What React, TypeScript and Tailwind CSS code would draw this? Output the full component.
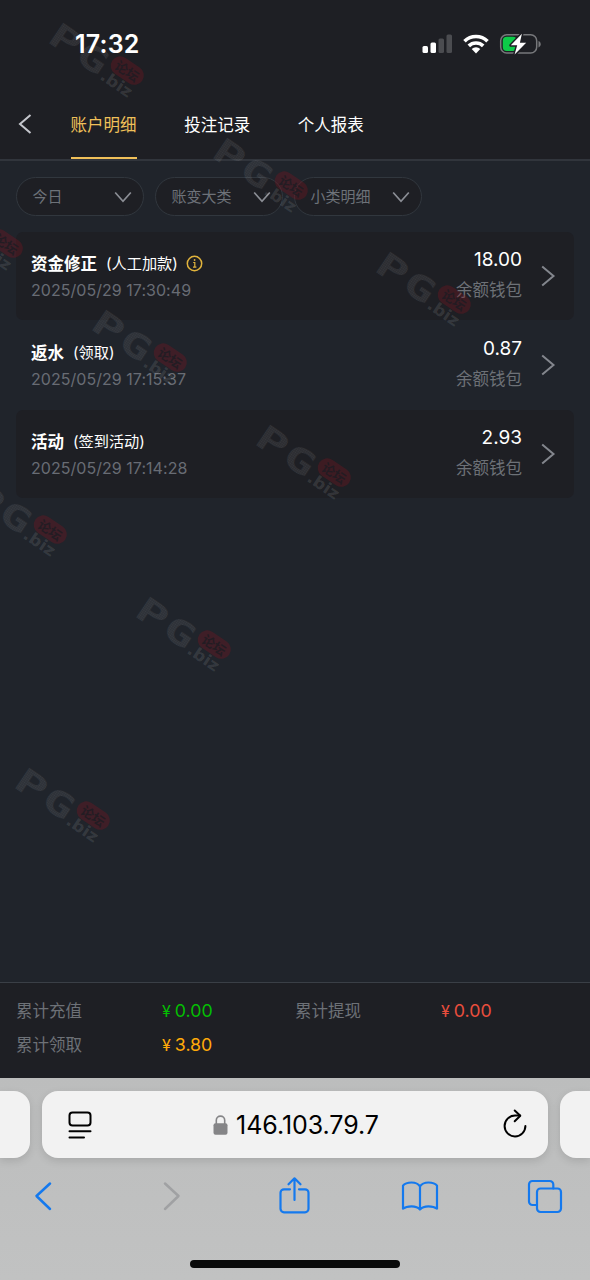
import type { ReactNode } from 'react';
import clsx from 'clsx';

interface RecordItem {
  id: number;
  title: string;
  detail: string;
  time: string;
  amount: string;
  wallet: string;
  hasInfo?: boolean;
}

const tabs = ['账户明细', '投注记录', '个人报表'];

const filters = ['今日', '账变大类', '小类明细'];

const records: RecordItem[] = [
  { id: 1, title: '资金修正', detail: '(人工加款)', time: '2025/05/29 17:30:49', amount: '18.00', wallet: '余额钱包', hasInfo: true },
  { id: 2, title: '返水', detail: '(领取)', time: '2025/05/29 17:15:37', amount: '0.87', wallet: '余额钱包' },
  { id: 3, title: '活动', detail: '(签到活动)', time: '2025/05/29 17:14:28', amount: '2.93', wallet: '余额钱包' },
];

const totals = [
  { label: '累计充值', value: '0.00', color: 'text-[#04be02]' },
  { label: '累计提现', value: '0.00', color: 'text-[#ea4e3d]' },
  { label: '累计领取', value: '3.80', color: 'text-[#ffaa09]' },
];

// Centre of the badge in every watermark stamp
const stamps = [
  [127, 71], [291, 186], [454, 300],
  [6, 244], [170, 358], [334, 473],
  [50, 530], [214, 645], [93, 816],
];

function StatusBar() {
  return (
    <div className="flex h-[88px] items-center justify-between pl-[75px] pr-[48px]">
      <span className="text-[25px] font-semibold leading-none tracking-[0.2px] text-white">17:32</span>
      <div className="flex items-center">
        <svg width="31" height="20" viewBox="0 0 31 20">
          <rect x="0.5" y="12" width="5.5" height="7" rx="1.5" fill="#fff" />
          <rect x="8.5" y="8.5" width="5.5" height="10.5" rx="1.5" fill="#fff" />
          <rect x="16.5" y="4.5" width="5.5" height="14.5" rx="1.5" fill="#4b4c50" />
          <rect x="24.5" y="0.5" width="5.5" height="18.5" rx="1.5" fill="#4b4c50" />
        </svg>
        <svg className="ml-[10px]" width="26" height="20" viewBox="0 0 26 20" fill="none" stroke="#fff" strokeWidth="3.6">
          <path d="M1.5 7.2a16.4 16.4 0 0 1 23 0" />
          <path d="M5.8 11.9a10.3 10.3 0 0 1 14.4 0" />
          <path d="M13 19.5l-4.3-4.4a6.2 6.2 0 0 1 8.6 0z" fill="#fff" stroke="none" />
        </svg>
        <svg className="ml-[10px]" width="43" height="24" viewBox="0 0 43 24">
          <rect x="1.7" y="2.7" width="36" height="18.4" rx="6" fill="none" stroke="#77787b" strokeWidth="1.5" />
          <path d="M39.5 9v6.4c1.6-.7 2.2-1.8 2.2-3.2s-.6-2.5-2.2-3.2z" fill="#77787b" />
          <rect x="3.8" y="4.8" width="14" height="14.2" rx="4" fill="#0ccb48" />
          <path
            d="M22.9 1.8L11.8 13.3h6.4L15.6 22.6l11.6-11.9h-6.3z"
            fill="#fff"
            stroke="#1e1f24"
            strokeWidth="3"
            strokeLinejoin="round"
            paintOrder="stroke"
          />
        </svg>
      </div>
    </div>
  );
}

function TabBar() {
  return (
    <nav className="flex h-[73px] border-b-2 border-[#31353c] pl-[18px]">
      <svg className="mt-[25px]" width="14" height="22" viewBox="0 0 14 22" fill="none" stroke="#c5c7cd" strokeWidth="2">
        <path d="M12.5 2L2 11l10.5 9" />
      </svg>
      <div className="ml-[38.6px] flex gap-[47.6px]">
        {tabs.map((tab, index) => (
          <button
            key={tab}
            className={clsx(
              'h-[71px] border-b-2 pt-[2px] text-[16.5px] leading-[70px]',
              index === 0 ? 'border-[#f0c059] text-[#f0c059]' : 'border-transparent text-white',
            )}
          >
            {tab}
          </button>
        ))}
      </div>
    </nav>
  );
}

function FilterSelect({ label }: { label: string }) {
  return (
    <button className="flex h-[39px] w-[128px] items-center justify-between rounded-full border-[1.5px] border-[#31373e] bg-[#1e1f24] pl-4 pr-[10.5px] text-[15px] text-[#6d7279]">
      <span className="pt-[2px]">{label}</span>
      <svg width="18" height="12" viewBox="0 0 18 12" fill="none" stroke="#8b8e95" strokeWidth="1.7">
        <path d="M1.2 1.5L9 10.3l7.8-8.8" />
      </svg>
    </button>
  );
}

function RecordRow({ record, striped }: { record: RecordItem; striped: boolean }) {
  return (
    <li className={clsx('flex h-[88px] rounded-[7px] pl-[15px] pr-[18px]', striped && 'bg-[#1e1f24]')}>
      <div className="flex-1 pt-[20px]">
        <div className="flex h-6 items-center">
          <span className="text-[16.5px] font-bold text-white">{record.title}</span>
          <span className="ml-[9px] text-[15.2px] text-white">{record.detail}</span>
          {record.hasInfo && (
            <svg className="-mt-[2px] ml-2" width="17" height="17" viewBox="0 0 17 17" fill="none" stroke="#e2b43c" strokeWidth="1.5">
              <circle cx="8.5" cy="8.5" r="7.2" />
              <path d="M7.2 7.5h1.6v4.6M7 12.2h3.4" strokeWidth="1.2" />
              <circle cx="8.6" cy="5" r="0.9" fill="#e2b43c" stroke="none" />
            </svg>
          )}
        </div>
        <p className="mt-[2px] text-[16px] leading-6 tracking-[0.04px] text-[#686c74]">{record.time}</p>
      </div>
      <div className="pt-4 text-right">
        <p className="text-[19px] leading-6 text-white">{record.amount}</p>
        <p className="mt-[6px] text-[16.5px] leading-6 text-[#6d7177]">{record.wallet}</p>
      </div>
      <svg className="ml-[18px] mt-[33px]" width="16" height="22" viewBox="0 0 16 22" fill="none" stroke="#83868d" strokeWidth="2">
        <path d="M2.2 1.5L13.5 11 2.2 20.5" />
      </svg>
    </li>
  );
}

function Totals() {
  return (
    <section className="h-[96px] border-t border-[#3a3f46] bg-[#1e1f24] px-4 pt-[11px]">
      <div className="grid grid-cols-2 text-[16.5px] leading-[34px]">
        {totals.map(total => (
          <div key={total.label} className="flex">
            <span className="w-[146px] text-[#6d7177]">{total.label}</span>
            <span className={clsx('flex items-center', total.color)}>
              <span className="text-[16px]">¥</span>
              <span className="ml-1 text-[17.8px]">{total.value}</span>
            </span>
          </div>
        ))}
      </div>
    </section>
  );
}

function ToolIcon({ children, className }: { children: ReactNode; className?: string }) {
  return (
    <svg
      className={clsx('shrink-0', className)}
      width="38"
      height="40"
      viewBox="0 0 38 40"
      fill="none"
      stroke="currentColor"
      strokeWidth="2.2"
      strokeLinecap="round"
      strokeLinejoin="round"
    >
      {children}
    </svg>
  );
}

function BrowserBar() {
  return (
    <footer className="h-[202px] bg-gradient-to-b from-[#bcbdbd] to-[#c1c2c2] pt-[13px]">
      <div className="flex h-[67px] justify-between">
        <div className="w-[30px] rounded-r-2xl bg-[#f2f2f2] shadow-[0_3px_9px_rgba(0,0,0,0.12)]" />
        <div className="flex w-[506px] items-center justify-between rounded-2xl bg-[#f2f2f2] pl-[26px] pr-[21px] text-black shadow-[0_3px_9px_rgba(0,0,0,0.12)]">
          <svg width="24" height="28" viewBox="0 0 24 28" fill="none" stroke="currentColor" strokeWidth="2" strokeLinecap="round">
            <rect x="1.5" y="1.5" width="21" height="13" rx="3" />
            <path d="M1.5 20.3h21M1.5 26.5h14.5" />
          </svg>
          <div className="-ml-[3px] flex items-center">
            <svg width="15" height="20" viewBox="0 0 15 20">
              <path d="M3.3 9V5.3a4.2 4.2 0 0 1 8.4 0V9" fill="none" stroke="#858587" strokeWidth="1.6" />
              <rect x="0.5" y="8.3" width="14" height="11.5" rx="2" fill="#858587" />
            </svg>
            <span className="ml-2 pt-[2px] text-[25px] leading-none tracking-[-0.05px]">146.103.79.7</span>
          </div>
          <svg className="-mt-[2px]" width="24" height="29" viewBox="0 0 24 29" fill="none" stroke="currentColor" strokeWidth="2" strokeLinecap="round" strokeLinejoin="round">
            <path d="M17 6.6h-5A10.4 10.4 0 1 0 22.4 17" />
            <path d="M11.7 1.5l5.6 5.2-5.6 5.5" />
          </svg>
        </div>
        <div className="w-[30px] rounded-l-2xl bg-[#f2f2f2] shadow-[0_3px_9px_rgba(0,0,0,0.12)]" />
      </div>

      <div className="mt-[17px] flex justify-between pl-[24px] pr-[26px] text-[#1479ee]">
        <ToolIcon>
          <path d="M26 8.5L12.5 21 26 34" strokeWidth="2.5" />
        </ToolIcon>
        <ToolIcon className="text-[#a0a1a3]">
          <path d="M15 8.5L28.5 21 15 34" strokeWidth="2.5" />
        </ToolIcon>
        <ToolIcon>
          <path d="M15 14.3H9a3.5 3.5 0 0 0-3.5 3.5v16A3.5 3.5 0 0 0 9 37.3h21a3.5 3.5 0 0 0 3.5-3.5v-16a3.5 3.5 0 0 0-3.5-3.5h-6" />
          <path d="M19.5 25V3.5M13.5 9.3l6-6 6 6" />
        </ToolIcon>
        <ToolIcon>
          <path d="M19 11.5c-1.5-2.500-4.500-4-8.500-4s-7 1.200-8.500 3.200v23c2.200-1.700 5-2.400 8.500-2.400s6.500.8 8.500 3.200c2-2.400 5-3.200 8.500-3.200s6.300.7 8.500 2.400v-23c-1.500-2-4.500-3.200-8.500-3.200s-7 1.500-8.500 4zv23" />
        </ToolIcon>
        <ToolIcon>
          <path d="M10.500 30h-4A3.500 3.500 0 0 1 3 26.500v-17A3.500 3.500 0 0 1 6.500 6h17.300a3.500 3.500 0 0 1 3.500 3.500v4" />
          <rect x="11" y="13.500" width="24" height="23.500" rx="3.500" />
        </ToolIcon>
      </div>

      <div className="mx-auto mt-[45px] h-2 w-[210px] rounded-full bg-[#0a0b0b]" />
    </footer>
  );
}

function Watermark() {
  return (
    <svg className="pointer-events-none absolute inset-0" width="590" height="1078" viewBox="0 0 590 1078">
      <defs>
        <pattern id="dots" width="2" height="2" patternUnits="userSpaceOnUse">
          <rect width="2" height="2" fill="#fff" fillOpacity="0.05" />
          <rect width="1.3" height="1.3" fill="#fff" fillOpacity="0.06" />
        </pattern>
      </defs>
      {stamps.map(([x, y]) => (
        <g key={`${x}-${y}`} transform={`translate(${x} ${y}) rotate(34)`}>
          <g fontFamily="DejaVu Sans Mono" fontSize="34" fontWeight="700" fill="url(#dots)">
            <text x="-84" y="20.5" textLength="31" lengthAdjust="spacingAndGlyphs">P</text>
            <text x="-51" y="20.5" textLength="31" lengthAdjust="spacingAndGlyphs">G</text>
          </g>
          <rect x="-18" y="-10" width="36" height="19" rx="9.5" fill="#7c1420" fillOpacity="0.34" />
          <text x="-13" y="5" fontFamily="Noto Sans CJK SC" fontSize="13" fontWeight="700" fill="#1c1c22" fillOpacity="0.8">论坛</text>
          <text x="-19" y="22" fontFamily="DejaVu Sans" fontSize="16" fontWeight="700" textLength="35" lengthAdjust="spacingAndGlyphs" fill="#fff" fillOpacity="0.11">.biz</text>
        </g>
      ))}
    </svg>
  );
}

export default function App() {
  return (
    <div className="relative flex h-[1280px] w-[590px] flex-col overflow-hidden bg-[#20242b] font-['Inter','Noto_Sans_CJK_SC',sans-serif]">
      {/* Header */}
      <header className="bg-[#1e1f24]">
        <StatusBar />
        <TabBar />
      </header>

      {/* Filters */}
      <div className="flex gap-[11px] px-[15.5px] pt-4">
        {filters.map(label => (
          <FilterSelect key={label} label={label} />
        ))}
      </div>

      {/* Account records */}
      <ul className="mt-4 flex flex-1 flex-col gap-px px-4">
        {records.map((record, index) => (
          <RecordRow key={record.id} record={record} striped={index % 2 === 0} />
        ))}
      </ul>

      <Totals />
      <BrowserBar />
      <Watermark />
    </div>
  );
}
